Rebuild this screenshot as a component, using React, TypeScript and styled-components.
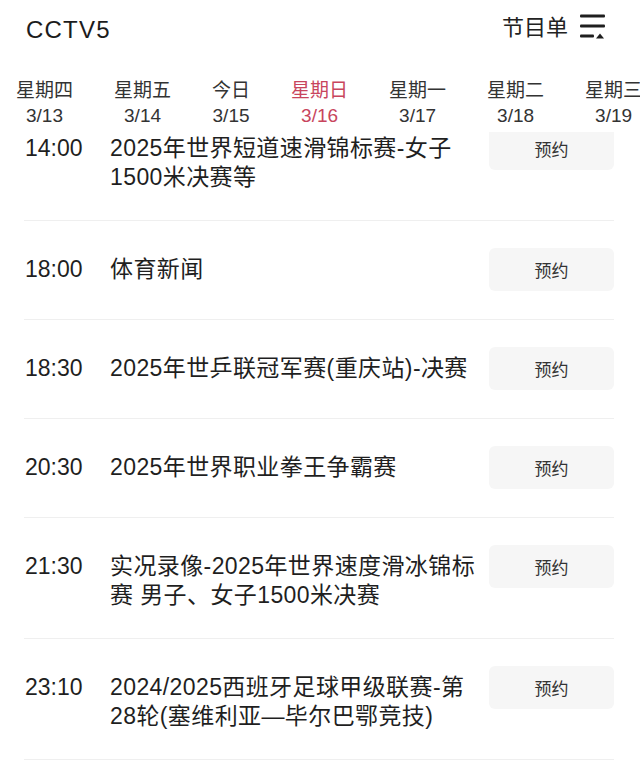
import styled, { createGlobalStyle } from "styled-components";

const GlobalStyle = createGlobalStyle`
  * {
    box-sizing: border-box;
    margin: 0;
    padding: 0;
  }

  body {
    background: #ffffff;
    color: #1f1f1f;
    font-family: "Liberation Sans", "Noto Sans CJK SC", sans-serif;
  }
`;

const Page = styled.main`
  display: flex;
  flex-direction: column;
  width: 640px;
  height: 762px;
  overflow: hidden;
  background: #ffffff;
`;

const Header = styled.header`
  height: 60px;
  display: flex;
  align-items: center;
  justify-content: space-between;
  padding: 0 34px 0 26px;
`;

const Channel = styled.h1`
  font-size: 24px;
  font-weight: 400;
  letter-spacing: 1.2px;
  line-height: 1;
  color: #1c1c1c;
`;

const MenuButton = styled.button`
  display: flex;
  align-items: center;
  gap: 11px;
  margin-top: -5px;
  border: 0;
  background: none;
  font: inherit;
  font-size: 22px;
  line-height: 1;
  color: #222222;
`;

const MenuIcon = styled.svg`
  display: block;
  margin-top: -2px;
`;

const DateTabs = styled.nav`
  display: flex;
  gap: 41px;
  padding: 18px 0 4px 16px;
  white-space: nowrap;
  overflow: hidden;
`;

const DateTab = styled.div<{ $active?: boolean }>`
  display: flex;
  flex-direction: column;
  align-items: center;
  flex-shrink: 0;
  font-size: 19px;
  line-height: 25px;
  color: ${(p) => (p.$active ? "#c8455d" : "#333333")};
`;

const Viewport = styled.section`
  flex: 1;
  overflow: hidden;
`;

// list is scrolled down a little, first row sits partly under the tabs
const List = styled.ul`
  list-style: none;
  margin-top: -32px;
`;

const Row = styled.li`
  display: flex;
  align-items: flex-start;
  margin: 0 26px 0 24px;
  padding: 27px 0 28px;
  border-bottom: 1px solid #efefef;
`;

const Time = styled.span`
  width: 86px;
  flex-shrink: 0;
  padding-left: 1px;
  margin-top: 7px;
  font-size: 23px;
  line-height: 29px;
  color: #1f1f1f;
`;

const Title = styled.p`
  flex: 1;
  margin: 7px 8px 0 0;
  font-size: 23px;
  line-height: 29px;
  letter-spacing: 0.4px;
  color: #1f1f1f;
`;

const Reserve = styled.button`
  width: 125px;
  height: 43px;
  flex-shrink: 0;
  border: 0;
  border-radius: 6px;
  background: #f6f6f6;
  font: inherit;
  font-size: 17px;
  color: #333333;
`;

const days = [
  { week: "星期四", date: "3/13" },
  { week: "星期五", date: "3/14" },
  { week: "今日", date: "3/15" },
  { week: "星期日", date: "3/16", active: true },
  { week: "星期一", date: "3/17" },
  { week: "星期二", date: "3/18" },
  { week: "星期三", date: "3/19" },
];

const programs = [
  { time: "14:00", title: "2025年世界短道速滑锦标赛-女子1500米决赛等" },
  { time: "18:00", title: "体育新闻" },
  { time: "18:30", title: "2025年世乒联冠军赛(重庆站)-决赛" },
  { time: "20:30", title: "2025年世界职业拳王争霸赛" },
  { time: "21:30", title: "实况录像-2025年世界速度滑冰锦标赛 男子、女子1500米决赛" },
  { time: "23:10", title: "2024/2025西班牙足球甲级联赛-第28轮(塞维利亚—毕尔巴鄂竞技)" },
];

export default function App() {
  return (
    <>
      <GlobalStyle />
      <Page>
        <Header>
          <Channel>CCTV5</Channel>
          <MenuButton>
            节目单
            <MenuIcon width="27" height="26" viewBox="0 0 27 26">
              <rect x="1" y="0.5" width="25" height="3" rx="1" fill="#1f1f1f" />
              <rect x="1" y="10.5" width="25" height="3" rx="1" fill="#1f1f1f" />
              <rect x="1" y="20.5" width="14" height="3" rx="1" fill="#1f1f1f" />
              <path d="M17 24.5 L25 24.5 L21 19.5 Z" fill="#1f1f1f" />
            </MenuIcon>
          </MenuButton>
        </Header>

        <DateTabs>
          {days.map((d) => (
            <DateTab key={d.date} $active={d.active}>
              <span>{d.week}</span>
              <span>{d.date}</span>
            </DateTab>
          ))}
        </DateTabs>

        <Viewport>
          <List>
            {programs.map((p) => (
              <Row key={p.time}>
                <Time>{p.time}</Time>
                <Title>{p.title}</Title>
                <Reserve>预约</Reserve>
              </Row>
            ))}
          </List>
        </Viewport>
      </Page>
    </>
  );
}
